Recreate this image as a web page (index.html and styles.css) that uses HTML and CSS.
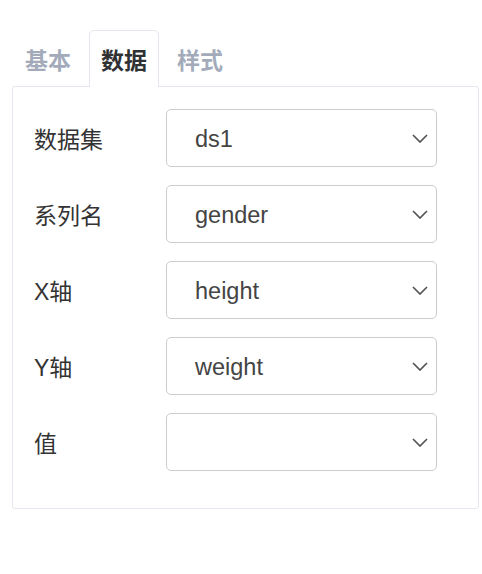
FILE: index.html
```html
<!DOCTYPE html>
<html lang="zh">
<head>
<meta charset="utf-8">
<title>数据</title>
<link rel="stylesheet" href="styles.css">
</head>
<body>
<div class="wrap">
  <div class="tabs">
    <div class="tab">基本</div>
    <div class="tab active">数据</div>
    <div class="tab">样式</div>
  </div>
  <div class="panel">
    <div class="row">
      <div class="label">数据集</div>
      <div class="select"><span class="value">ds1</span><svg class="chev" width="16" height="9" viewBox="0 0 16 9"><polyline points="1,1 8,8 15,1"/></svg></div>
    </div>
    <div class="row">
      <div class="label">系列名</div>
      <div class="select"><span class="value">gender</span><svg class="chev" width="16" height="9" viewBox="0 0 16 9"><polyline points="1,1 8,8 15,1"/></svg></div>
    </div>
    <div class="row">
      <div class="label">X轴</div>
      <div class="select"><span class="value">height</span><svg class="chev" width="16" height="9" viewBox="0 0 16 9"><polyline points="1,1 8,8 15,1"/></svg></div>
    </div>
    <div class="row">
      <div class="label">Y轴</div>
      <div class="select"><span class="value">weight</span><svg class="chev" width="16" height="9" viewBox="0 0 16 9"><polyline points="1,1 8,8 15,1"/></svg></div>
    </div>
    <div class="row">
      <div class="label">值</div>
      <div class="select"><span class="value"></span><svg class="chev" width="16" height="9" viewBox="0 0 16 9"><polyline points="1,1 8,8 15,1"/></svg></div>
    </div>
  </div>
</div>
</body>
</html>
```
FILE: styles.css
```css
html, body {
  margin: 0;
  padding: 0;
  background: #ffffff;
}
body {
  font-family: "Liberation Sans", "Noto Sans CJK SC", sans-serif;
}
.wrap {
  padding: 30px 0 0 12px;
  width: 467px;
}
.tabs {
  display: flex;
  gap: 6px;
  padding-left: 1px;
}
.tab {
  height: 57px;
  box-sizing: border-box;
  padding: 0 11px;
  border: 1px solid transparent;
  border-bottom: none;
  border-radius: 5px 5px 0 0;
  display: flex;
  align-items: center;
  font-family: "Noto Sans CJK SC", sans-serif;
  font-size: 23px;
  font-weight: 700;
  color: #a3abbb;
  margin-bottom: -1px;
}
.tab.active {
  border-color: #e4e7ed;
  background: #ffffff;
  color: #303133;
  position: relative;
  z-index: 1;
}
.panel {
  border: 1px solid #e4e7ed;
  border-radius: 3px;
  padding: 22px 41px 19px 21px;
}
.row {
  display: flex;
  align-items: center;
  height: 58px;
  margin-bottom: 18px;
}
.label {
  width: 132px;
  flex: none;
  font-size: 23px;
  color: #333333;
}
.select {
  flex: 1;
  height: 58px;
  box-sizing: border-box;
  border: 1px solid #cccccc;
  border-radius: 5px;
  display: flex;
  align-items: center;
  padding: 2px 8px 0 28px;
}
.value {
  flex: 1;
  font-size: 23.5px;
  color: #444444;
}
.chev {
  flex: none;
  margin-top: -2px;
}
.chev polyline {
  fill: none;
  stroke: #555555;
  stroke-width: 1.7;
}
```
